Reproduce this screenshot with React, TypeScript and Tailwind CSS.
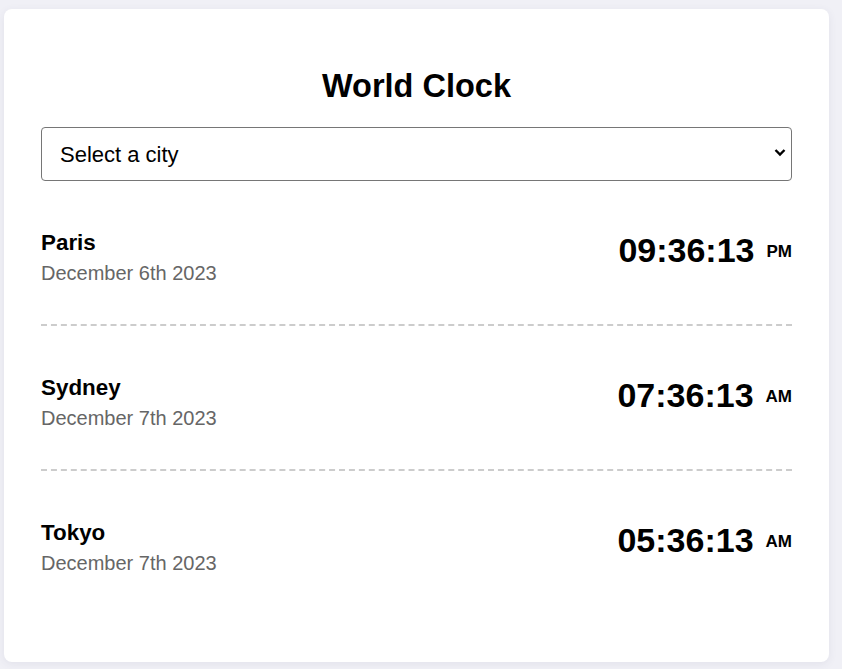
const cities = [
  { name: "Paris", date: "December 6th 2023", time: "09:36:13", period: "PM" },
  { name: "Sydney", date: "December 7th 2023", time: "07:36:13", period: "AM" },
  { name: "Tokyo", date: "December 7th 2023", time: "05:36:13", period: "AM" },
];

const App = () => {
  return (
    <div className="min-h-[669px] bg-[#f0f0f6] pt-[9px] pl-[4px] font-['Liberation_Sans',Arial,sans-serif]">
      <div className="w-[825px] rounded-[8px] bg-white px-[37px] pt-[59px] pb-[48px] shadow-[0_2px_8px_rgba(60,60,100,0.08)]">
        <h1 className="text-center text-[32.5px] font-bold leading-[37px] text-black">World Clock</h1>

        <div className="relative mt-[22px]">
          <select className="h-[54px] w-full appearance-none rounded-[4px] border border-[#767676] bg-white pl-[18px] text-[22px] text-black">
            <option>Select a city</option>
          </select>
          <svg
            className="pointer-events-none absolute right-[6px] top-[21px]"
            width="12"
            height="9"
            viewBox="0 0 12 9"
          >
            <path d="M1.5 2 L6 6.5 L10.5 2" fill="none" stroke="#000" strokeWidth="2.4" />
          </svg>
        </div>

        <div>
          {cities.map((city, i) => (
            <div
              key={city.name}
              className={
                i < cities.length - 1
                  ? "flex items-start justify-between border-b-2 border-dashed border-[#cccccc] pt-[49px] pb-[40px]"
                  : "flex items-start justify-between pt-[49px] pb-[40px]"
              }
            >
              <div>
                <div className="text-[22.4px] font-bold leading-[26px] text-black">{city.name}</div>
                <div className="mt-[6px] text-[20px] leading-[22px] text-[#666666]">{city.date}</div>
              </div>
              <div className="flex items-start">
                <span className="text-[34px] font-bold leading-[40px] text-black">{city.time}</span>
                <span className="ml-[12px] mt-[13px] text-[17px] font-bold leading-[18px] text-black">
                  {city.period}
                </span>
              </div>
            </div>
          ))}
        </div>
      </div>
    </div>
  );
};

export default App;
